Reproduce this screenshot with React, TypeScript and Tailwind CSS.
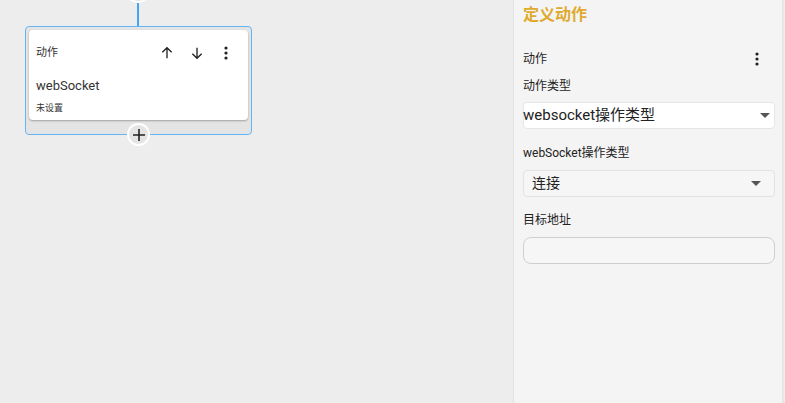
import React from "react";

const font = { fontFamily: "Roboto, 'Noto Sans CJK SC', sans-serif" };

function Caret() {
  return (
    <svg width="10" height="6" viewBox="0 0 10 6">
      <path d="M0 0 L10 0 L5 5 Z" fill="#555" />
    </svg>
  );
}

function Kebab() {
  return (
    <svg width="4" height="14" viewBox="0 0 4 14">
      <circle cx="2" cy="2" r="1.6" fill="#222" />
      <circle cx="2" cy="7" r="1.6" fill="#222" />
      <circle cx="2" cy="12" r="1.6" fill="#222" />
    </svg>
  );
}

export default function App() {
  return (
    <div className="flex w-[785px] h-[403px] overflow-hidden bg-[#ededed] text-[#222]" style={font}>
      {/* canvas */}
      <div className="relative w-[513px] h-full">
        <div className="absolute left-[125px] top-[-14px] w-[26px] h-[17px] rounded-b-full bg-[#e6e6e6] border-2 border-white" />
        <div className="absolute left-[137px] top-[3px] w-[2px] h-[24px] bg-[#42a5f5]" />
        <div className="absolute left-[25px] top-[26px] w-[227px] h-[109px] rounded-[4px] border border-[#64b5f6] bg-[#e4e4e4] p-[3px]">
          <div className="bg-white rounded-[4px] h-[90px] shadow-[0_1px_2px_rgba(0,0,0,0.3)] px-[7px]">
            <div className="flex items-center h-[44px] pt-[3px]">
              <span className="text-[11px] text-[#333]">动作</span>
              <div className="ml-auto flex items-center pr-[13px] mt-[-2px]">
                <svg width="16" height="16" viewBox="0 0 24 24" className="mr-[14px]"><path d="M12 20V4M5 11l7-7 7 7" stroke="#222" strokeWidth="2" fill="none" /></svg>
                <svg width="16" height="16" viewBox="0 0 24 24" className="mr-[19px]"><path d="M12 4v16M5 13l7 7 7-7" stroke="#222" strokeWidth="2" fill="none" /></svg>
                <Kebab />
              </div>
            </div>
            <div className="text-[13px] text-[#333] leading-[16px] mt-[4px]">webSocket</div>
            <div className="text-[9px] text-[#333] mt-[8px]">未设置</div>
          </div>
        </div>
        <div className="absolute left-[127px] top-[123px] w-[23px] h-[23px] rounded-full bg-[#e4e4e4] border-2 border-white flex items-center justify-center">
          <svg width="12" height="12" viewBox="0 0 12 12"><path d="M6 0v12M0 6h12" stroke="#222" strokeWidth="1.6" /></svg>
        </div>
      </div>
      {/* right panel */}
      <div className="w-[271px] h-full bg-[#f4f4f4] border-l border-[#e2e2e2] border-r-2 border-r-[#e6e6e6] pl-[9px] pr-[8px]">
        <div className="text-[16px] font-bold text-[#dfaa2f] mt-[4px] leading-[21px]">定义动作</div>
        <div className="flex items-center mt-[25px] h-[18px]">
          <span className="text-[12px]">动作</span>
          <span className="ml-auto mr-[15px]"><Kebab /></span>
        </div>
        <div className="text-[12px] mt-[10px] leading-[16px]">动作类型</div>
        <div className="mt-[8px] h-[27px] w-[252px] bg-white rounded-[4px] border border-[#e6e6e6] flex items-center pr-[4px]">
          <span className="text-[15px] text-[#222] ml-[-1px]">websocket操作类型</span>
          <span className="ml-auto"><Caret /></span>
        </div>
        <div className="text-[12px] mt-[16px] leading-[16px]">webSocket操作类型</div>
        <div className="mt-[9px] h-[27px] w-[252px] bg-[#f6f6f6] rounded-[4px] border border-[#e2e2e2] flex items-center pl-[8px] pr-[13px]">
          <span className="text-[14px] text-[#222]">连接</span>
          <span className="ml-auto"><Caret /></span>
        </div>
        <div className="text-[12px] mt-[15px] leading-[16px]">目标地址</div>
        <div className="mt-[9px] h-[27px] w-[252px] bg-[#f6f6f6] rounded-[8px] border border-[#cfcfcf]" />
      </div>
    </div>
  );
}
